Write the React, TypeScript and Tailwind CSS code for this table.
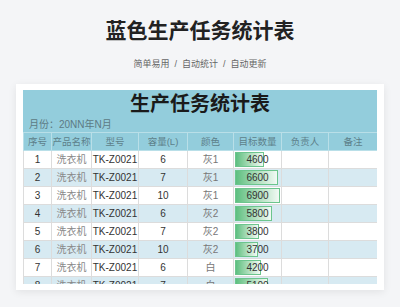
import React from "react";

const rows = [
  { no: 1, name: "洗衣机", model: "TK-Z0021", cap: 6, color: "灰1", target: 4600 },
  { no: 2, name: "洗衣机", model: "TK-Z0021", cap: 7, color: "灰1", target: 6600 },
  { no: 3, name: "洗衣机", model: "TK-Z0021", cap: 10, color: "灰1", target: 6900 },
  { no: 4, name: "洗衣机", model: "TK-Z0021", cap: 6, color: "灰2", target: 5800 },
  { no: 5, name: "洗衣机", model: "TK-Z0021", cap: 7, color: "灰2", target: 3800 },
  { no: 6, name: "洗衣机", model: "TK-Z0021", cap: 10, color: "灰2", target: 3700 },
  { no: 7, name: "洗衣机", model: "TK-Z0021", cap: 6, color: "白", target: 4200 },
  { no: 8, name: "洗衣机", model: "TK-Z0021", cap: 7, color: "白", target: 5100 },
];

const headers = ["序号", "产品名称", "型号", "容量(L)", "颜色", "目标数量", "负责人", "备注"];
const widths = [28, 40, 47, 49, 46, 48, 47, 49];

const cjk = "font-['Liberation_Sans','Noto_Sans_CJK_SC',sans-serif]";
const cell = "border border-[#dcdcdc] p-0 text-center leading-[17px] whitespace-nowrap overflow-hidden";

export default function App() {
  return (
    <div className={`w-[400px] h-[307px] overflow-hidden bg-[#f4f5f7] ${cjk}`}>
      {/* 標題 */}
      <div className="pt-[17px] text-center">
        <h1 className="text-[21px] leading-[28px] font-bold text-[#222]">蓝色生产任务统计表</h1>
        <p className="mt-[13px] text-[9px] leading-[12px] text-[#666]">
          简单易用 &nbsp;/&nbsp; 自动统计 &nbsp;/&nbsp; 自动更新
        </p>
      </div>

      {/* 表格卡片 */}
      <div className="mx-[16px] mt-[14px] bg-white px-[7px] pt-[6px] pb-[6px] shadow-[0_2px_8px_rgba(0,0,0,0.08)]">
        <div className="h-[194px] overflow-hidden">
          <div className="bg-[#93cddc] h-[42px] relative">
            <div className="text-center text-[20px] leading-[26px] font-bold text-[#1a1a1a] pt-[1px]">
              生产任务统计表
            </div>
            <div className="absolute left-[6px] top-[28px] text-[10px] leading-[13px] text-[#5d7a84]">
              月份：20NN年N月
            </div>
          </div>
          <table className="table-fixed border-collapse w-[354px] text-[10px]">
            <colgroup>
              {widths.map((w, i) => (
                <col key={i} style={{ width: w }} />
              ))}
            </colgroup>
            <thead>
              <tr className="bg-[#93cddc] h-[18px]">
                {headers.map((h) => (
                  <th
                    key={h}
                    className="border border-[#b9dfe8] font-normal text-[9.5px] text-[#5d7f8a] leading-[17px] p-0 whitespace-nowrap overflow-hidden"
                  >
                    {h}
                  </th>
                ))}
              </tr>
            </thead>
            <tbody>
              {rows.map((r) => (
                <tr key={r.no} className={`h-[18px] ${r.no % 2 === 0 ? "bg-[#d7eaf2]" : "bg-white"}`}>
                  <td className={`${cell} text-[#333]`}>{r.no}</td>
                  <td className={`${cell} text-[#888]`}>{r.name}</td>
                  <td className={`${cell} text-[#333]`}>{r.model}</td>
                  <td className={`${cell} text-[#333]`}>{r.cap}</td>
                  <td className={`${cell} text-[#777]`}>{r.color}</td>
                  <td className={`${cell} relative`}>
                    <div
                      className="absolute left-[1px] top-[1px] bottom-[1px] border border-[#6cc58d] bg-gradient-to-r from-[#5cbf80] to-[#f2faf5]"
                      style={{ width: Math.round(r.target * 0.006875 - 2.4) }}
                    />
                    <div className="relative text-[#333]">{r.target}</div>
                  </td>
                  <td className={cell} />
                  <td className={cell} />
                </tr>
              ))}
            </tbody>
          </table>
        </div>
      </div>
    </div>
  );
}
